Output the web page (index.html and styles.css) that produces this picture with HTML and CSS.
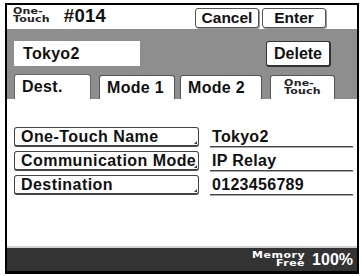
FILE: index.html
```html
<!DOCTYPE html>
<html>
<head>
<meta charset="utf-8">
<link rel="stylesheet" href="styles.css">
</head>
<body>
<div class="screen">
  <div class="header">
    <div class="small-label hdr-label">One-<br>Touch</div>
    <div class="num">#014</div>
    <div class="hdr-btns">
      <div class="btn hbtn">Cancel</div>
      <div class="btn hbtn">Enter</div>
    </div>
  </div>
  <div class="panel">
    <div class="row1">
      <div class="field">Tokyo2</div>
      <div class="btn delete">Delete</div>
    </div>
    <div class="tabs">
      <div class="tab active">Dest.</div>
      <div class="tab t2">Mode 1</div>
      <div class="tab t3">Mode 2</div>
      <div class="tab t4"><span class="small-label">One-<br>Touch</span></div>
    </div>
  </div>
  <div class="content">
    <div class="item">
      <div class="key">One-Touch Name</div>
      <div class="val">Tokyo2</div>
    </div>
    <div class="item">
      <div class="key">Communication Mode</div>
      <div class="val">IP Relay</div>
    </div>
    <div class="item">
      <div class="key">Destination</div>
      <div class="val">0123456789</div>
    </div>
  </div>
  <div class="sep"></div>
  <div class="status">
    <div class="small-label mem">Memory<br>Free</div>
    <div class="pct">100%</div>
  </div>
</div>
</body>
</html>
```
FILE: styles.css
```css
html, body { margin: 0; padding: 0; background: #fff; }
body { width: 362px; height: 276px; overflow: hidden; font-family: "Liberation Sans", Arial, sans-serif; font-weight: bold; color: #111; }
.screen {
  margin: 3px 0 0 5px;
  width: 350px;
  height: 266px;
  border: 2px solid #000;
  border-bottom-width: 3px;
  display: flex;
  flex-direction: column;
}
.small-label {
  display: inline-block;
  font-family: "DejaVu Sans", sans-serif;
  font-weight: bold;
  font-size: 11px;
  line-height: 10px;
  letter-spacing: 0.2px;
  color: #222;
  transform: scaleY(0.78);
}
.header {
  height: 24px;
  background: #fff;
  display: flex;
  align-items: center;
}
.hdr-label { margin-left: 6px; margin-top: -3px; }
.num { margin-left: 14px; font-size: 18.5px; margin-top: -2px; letter-spacing: 0.3px; }
.hdr-btns { margin-left: auto; margin-right: 31px; display: flex; gap: 3px; align-self: flex-start; margin-top: 3px; }
.btn {
  background: #fff;
  border: 1px solid #555;
  border-radius: 3px;
  box-sizing: border-box;
  display: flex;
  align-items: center;
  justify-content: center;
}
.hbtn {
  width: 64px;
  height: 20px;
  font-size: 15.5px;
  box-shadow: 1px 1px 0 #999;
  position: relative;
  z-index: 1;
}
.panel {
  height: 70px;
  background: #8e8e8e;
  display: flex;
  flex-direction: column;
}
.row1 { display: flex; margin-top: 12px; height: 26px; }
.field {
  margin-left: 7px;
  width: 126px;
  height: 25px;
  background: #fff;
  font-size: 16px;
  line-height: 25px;
  padding-left: 9px;
  box-sizing: border-box;
  letter-spacing: 0.3px;
}
.delete {
  margin-left: auto;
  margin-right: 26px;
  width: 65px;
  height: 26px;
  font-size: 16px;
  border: 1px solid #333;
  border-right-width: 2px;
  border-bottom-width: 2px;
}
.tabs { display: flex; margin-top: 7px; height: 25px; }
.tab {
  background: #fff;
  border: 1px solid #555;
  border-bottom: none;
  border-radius: 3px 3px 0 0;
  box-sizing: border-box;
  height: 25px;
  font-size: 16px;
  padding-left: 7px;
  display: flex;
  align-items: center;
  letter-spacing: 0.3px;
}
.tab.active { margin-left: 7px; width: 77px; border-color: #666; }
.tab.t2 { margin-left: 8px; width: 76px; height: 24px; margin-top: 1px; }
.tab.t3 { margin-left: 5px; width: 82px; height: 24px; margin-top: 1px; }
.tab.t4 { margin-left: 8px; width: 65px; height: 24px; margin-top: 1px; padding-left: 0; justify-content: center; }
.content {
  height: 147px;
  background: #fff;
  padding-top: 28px;
  box-sizing: border-box;
  display: flex;
  flex-direction: column;
  gap: 4px;
}
.item { display: flex; align-items: stretch; height: 20px; }
.key {
  margin-left: 7px;
  width: 185px;
  height: 20px;
  box-sizing: border-box;
  border: 1px solid #444;
  border-bottom-width: 2px;
  border-radius: 3px;
  font-size: 16px;
  letter-spacing: 0.45px;
  padding-left: 6px;
  display: flex;
  align-items: center;
  position: relative;
  white-space: nowrap;
}
.key::after {
  content: "";
  position: absolute;
  right: 1px;
  bottom: 1px;
  width: 0; height: 0;
  border-left: 3px solid transparent;
  border-bottom: 3px solid #333;
}
.val {
  margin-left: 11px;
  width: 143px;
  border-bottom: 1px solid #444;
  box-shadow: 0 1px 0 #aaa;
  font-size: 16px;
  letter-spacing: 0.3px;
  padding-left: 2px;
  line-height: 20px;
  height: 20px;
  box-sizing: border-box;
}
.sep { height: 2px; background: #cfcfcf; }
.status {
  flex: 1;
  background: #333;
  display: flex;
  align-items: center;
  justify-content: flex-end;
  padding-right: 4px;
  color: #fff;
}
.mem { color: #fff; text-align: right; margin-right: 7px; margin-top: 1px; letter-spacing: 0.5px; }
.pct { font-size: 16px; color: #fff; }
```
